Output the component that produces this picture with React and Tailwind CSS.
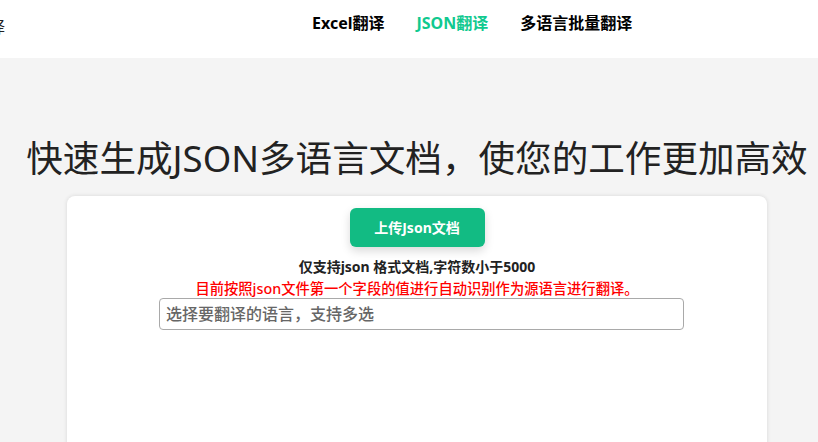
import React from 'react';

const font = { fontFamily: '"Noto Sans", "Noto Sans CJK SC", sans-serif' };

const navItems = [
  { label: 'Excel翻译', active: false },
  { label: 'JSON翻译', active: true },
  { label: '多语言批量翻译', active: false },
];

export default function App() {
  return (
    <div className="w-[818px] h-[442px] overflow-hidden bg-[#f4f4f4]" style={font}>
      <header className="h-[58px] bg-white flex items-start pt-[11px] overflow-hidden">
        <div className="w-[323px] shrink-0 text-[16px] leading-6 text-[#222] -ml-[11px] pt-[4px]">译</div>
        <nav className="flex gap-[32px]">
          {navItems.map((item) => (
            <a
              key={item.label}
              className={`text-[16px] leading-6 font-bold ${item.active ? 'text-[#10c98f]' : 'text-black'}`}
            >
              {item.label}
            </a>
          ))}
        </nav>
      </header>

      <h1 className="text-center text-[36.6px] leading-[48px] text-[#222] font-normal mt-[76px] ml-[16px] whitespace-nowrap">
        快速生成JSON多语言文档，使您的工作更加高效
      </h1>

      <div className="ml-[67px] w-[700px] mt-[14px] h-[300px] bg-white rounded-lg shadow-[0_0_4px_rgba(0,0,0,0.12)] flex flex-col items-center pt-[12px]">
        <button className="w-[135px] h-[39px] rounded-md bg-[#12bb83] text-white text-[14px] font-bold shadow-[0_4px_10px_rgba(0,0,0,0.15)]">
          上传Json文档
        </button>
        <p className="mt-[10px] text-[14px] leading-[20px] font-bold text-[#222]">仅支持json 格式文档,字符数小于5000</p>
        <p className="mt-[2px] text-[14.3px] leading-[20px] font-medium text-[#ff0000]">
          目前按照json文件第一个字段的值进行自动识别作为源语言进行翻译。
        </p>
        <div className="-mt-[1px] w-[525px] h-[32px] border border-[#a9a9a9] rounded-[4px] flex items-center px-[6px] ml-[9px]">
          <span className="text-[16px] font-medium text-[#666]">选择要翻译的语言，支持多选</span>
        </div>
      </div>
    </div>
  );
}
